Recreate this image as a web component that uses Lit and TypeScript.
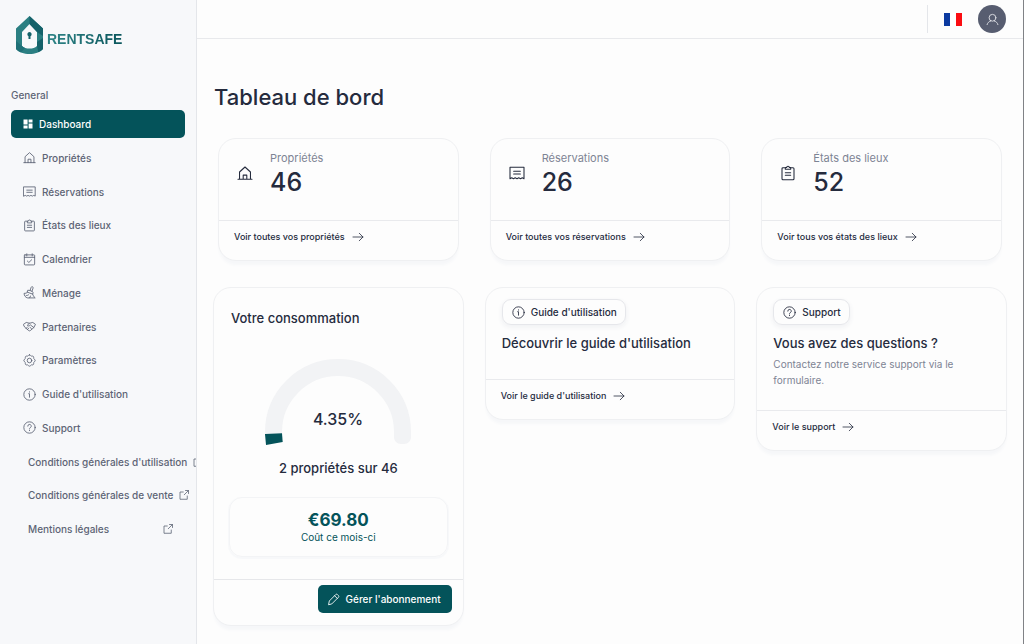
import { LitElement, html, svg, css } from "lit";
import { customElement, property } from "lit/decorators.js";

const icons: Record<string, unknown> = {
  dashboard: svg`<path fill="currentColor" stroke="none" d="M3 3h8.200v10H3zM3 15.200h8.200V21H3zM13.200 3H21v5.800h-7.800zM13.200 11H21v10h-7.800z"/>`,
  home: svg`<path d="M1.500 21.500h21M3.800 21.500v-11L12 3l8.200 7.500v11M9.300 21.500v-6.300h5.400v6.300"/>`,
  receipt: svg`<path d="M1.500 3.500h21v17l-2.600-1.300-2.600 1.300-2.700-1.300-2.600 1.300-2.700-1.300-2.600 1.300-2.600-1.300-2.600 1.300zM7 9.500h10M7 13.500h10"/>`,
  clipboard: svg`<path d="M8 4H4.500A1.500 1.500 0 0 0 3 5.500v15A1.500 1.500 0 0 0 4.500 22h15a1.500 1.500 0 0 0 1.500-1.500v-15A1.500 1.500 0 0 0 19.500 4H16M8 6.500V3.800h2a2 2 0 0 1 4 0h2v2.700zM8 11.500h8M8 15.500h8"/>`,
  calendar: svg`<path d="M3.500 3.500h17a1 1 0 0 1 1 1v16a1.500 1.500 0 0 1-1.500 1.500H4a1.500 1.500 0 0 1-1.500-1.500v-16a1 1 0 0 1 1-1zM2.500 8h19M7 1.500v4M17 1.500v4M8 14.800l2.800 2.700 5.200-5"/>`,
  broom: svg`<path d="M13 8.300l2-5.700a1.900 1.900 0 0 1 3.600 1.300l-2 5.700M9.500 7.800c3 0 7.500 1.600 9.300 4l-1 3.200-9.500-3.500zM8.300 11.500C6.500 13.300 4.500 13.700 2 13.500c0 4 2.500 8 6.500 8.500h14c-2-1.500-3.800-4-4.700-7M6 17.500c2 .2 3.500-.4 4.500-1.500M12 22c1-1 1.500-2 1.800-3.500"/>`,
  handshake: svg`<path d="M1 8l5-3.500 6 1.500 6-1.500L23 8l-3 6-6.500 5.500c-1 .8-2 .8-3 0L4 14zM12 6L8 9.500c.7 1.800 2.600 1.800 4 .5l1.500-1 6.500 5M6 15.500l2-2.500M8.500 17.500l2-2.500M13 13.500l3 3"/>`,
  gear: svg`<path d="M12 1.500c1.600 0 2.300 1.900 3.200 2.300s2.600-.6 3.900.7.300 3 .7 3.900 2.700 1.500 2.700 3.600-2.300 2.700-2.700 3.600.6 2.600-.7 3.900-3 .3-3.900.7-1.600 2.300-3.200 2.300-2.300-1.900-3.200-2.300-2.600.6-3.900-.7-.3-3-.7-3.900S1.500 14.100 1.500 12s2.300-2.700 2.700-3.600-.6-2.600.7-3.900 3-.3 3.900-.7S10.400 1.500 12 1.500z"/><circle cx="12" cy="12" r="4.200"/>`,
  info: svg`<circle cx="12" cy="12" r="10.500"/><path d="M10.500 10.500H12v6.500M12 7v.600"/>`,
  help: svg`<circle cx="12" cy="12" r="10.500"/><path d="M8.800 9.500a3.200 3.200 0 1 1 4.700 2.800c-1 .5-1.500 1-1.500 2.200M12 17v.800"/>`,
  external: svg`<path d="M10.500 6H4v14.500h14.500V14M15 3h6v6M21 3l-8.500 8.500"/>`,
  arrow: svg`<path d="M2 12h20M14.500 4.500L22 12l-7.500 7.500"/>`,
  pencil: svg`<path d="M3 21l1.300-6.300L16.200 2.800c.9-.9 2.100-.9 3 0l2 2c.9.900.9 2.100 0 3L9.300 19.700zM14 5l5 5"/>`,
  user: svg`<circle cx="12" cy="8.800" r="6.300"/><path d="M2 21.500c.8-3.300 3.200-5.800 6.800-6.800M22 21.500c-.8-3.300-3.200-5.800-6.800-6.800"/>`,
};

@customElement("rs-icon")
class RsIcon extends LitElement {
  @property() name = "";

  static styles = css`
    :host { display: block; flex: none; width: 13px; height: 13px; }
    .glyph { display: block; width: 100%; height: 100%; fill: none; stroke: currentColor; stroke-width: 1.6; stroke-linejoin: round; stroke-linecap: round; }
  `;

  render() {
    return html`<svg class="glyph" viewBox="0 0 24 24" aria-hidden="true">${icons[this.name]}</svg>`;
  }
}

@customElement("app-root")
class AppRoot extends LitElement {
  static styles = css`
    :host {
      display: flex;
      min-height: 100vh;
      box-sizing: border-box;
      border-right: 1px solid #808286;
      background: #fdfdfd;
      color: #252b3d;
      font-family: Inter, "Liberation Sans", sans-serif;
      font-size: 10px;
      line-height: 16px;
    }
    * { box-sizing: border-box; }
    a { color: inherit; text-decoration: none; }
    h1, h2, p { margin: 0; font-weight: 500; }
    button { font: inherit; border: 0; cursor: pointer; }

    .sidebar {
      flex: none;
      width: 197px;
      padding: 16px 11px;
      overflow: hidden;
      background: #f7f8fa;
      border-right: 1px solid #e4e6ea;
      color: #5d6475;
      font-weight: 500;
    }
    .logo { display: flex; align-items: center; gap: 4px; padding-left: 5px; }
    .mark { flex: none; width: 27px; height: 38px; }
    .brand {
      padding-top: 8px;
      font: bold 14px/16px "Liberation Sans", sans-serif;
      color: transparent;
      background: linear-gradient(90deg, #2f8587, #0a565c);
      background-clip: text;
      -webkit-background-clip: text;
    }
    .group { padding: 33px 0 7px; }
    .nav { display: flex; flex-direction: column; justify-content: space-between; min-height: 433px; }
    .item { display: flex; align-items: center; height: 28px; gap: 6px; padding: 0 12px; white-space: nowrap; }
    .active { background: #04535a; color: #fff; border-radius: 5px; padding: 0 11px; gap: 5px; }
    .outside { justify-content: space-between; padding: 0 11px 0 17px; gap: 5px; }
    .mini { width: 12px; height: 12px; }

    .page { flex: 1; min-width: 0; }
    .topbar { display: flex; align-items: center; justify-content: flex-end; height: 39px; padding-right: 17px; border-bottom: 1px solid #e8e9ec; }
    .lang { display: flex; align-items: center; height: 28px; padding: 0 16px; background: none; border-left: 1px solid #e4e6ea; }
    .flag { display: block; width: 18px; height: 13px; }
    .avatar { display: grid; place-items: center; width: 28px; height: 28px; padding: 0; border-radius: 50%; background: #575d70; color: #e6e7eb; }

    .content { padding: 42px 16px 18px; }
    .title { padding-left: 1px; font-size: 22px; line-height: 32px; }
    .grid { display: grid; grid-template-columns: repeat(3, minmax(0, 1fr)); gap: 21px; align-items: start; }
    .stats { padding: 25px 0 26px; }
    .card { border: 1px solid #eff0f2; border-radius: 18px; background: #fdfdfd; box-shadow: 0 5px 3px -1px #f6f7f9; }
    .stat { margin: 0 5px; }
    .figure { display: flex; height: 82px; padding: 11px 18px; gap: 17px; border-bottom: 1px solid #e9eaed; }
    .figure rs-icon { width: 16px; height: 16px; margin-top: 15px; }
    .label { color: #7d8494; font-size: 11px; font-weight: 400; line-height: 16px; }
    .count { font-size: 25px; line-height: 32px; }
    .foot { display: flex; height: 39px; padding: 8px 15px 0; }
    .more { display: flex; align-items: center; align-self: flex-start; gap: 7px; font-size: 9px; font-weight: 500; }
    .more rs-icon { width: 12px; height: 12px; }

    .usage { padding: 22px 15px; display: flex; flex-direction: column; border-bottom: 1px solid #e6e7ea; }
    .heading { font-size: 13px; line-height: 16px; padding-left: 2px; }
    .gauge { display: block; align-self: center; width: 146px; height: 86px; margin: 33px 0 15px; }
    .percent { font: 500 16px Inter, sans-serif; fill: #252b3d; text-anchor: middle; }
    .ratio { font-size: 13px; line-height: 16px; text-align: center; }
    .cost { margin-top: 21px; padding: 12px 0; border: 1px solid #f3f4f6; border-radius: 13px; box-shadow: 0 1px 1px 1px #f7f8fa; text-align: center; color: #04535a; }
    .price { font-size: 17px; font-weight: 700; line-height: 20px; }
    .note { font-weight: 400; line-height: 14px; }
    .actions { display: flex; justify-content: flex-end; padding: 5px 11px 12px; }
    .primary { display: flex; align-items: center; gap: 6px; height: 28px; padding: 0 11px 0 9px; border-radius: 5px; background: #04535a; color: #fff; font-weight: 500; }

    .help { display: flex; flex-direction: column; align-items: flex-start; padding: 11px 16px 28px; border-bottom: 1px solid #e9eaed; }
    .pill { display: flex; align-items: center; gap: 6px; height: 26px; padding: 0 8px 0 9px; border: 1px solid #e6e7eb; border-radius: 9px; box-shadow: 0 2px 4px 1px #f2f3f5; font-weight: 500; }
    .question { margin-top: 10px; font-size: 13px; line-height: 16px; }
    .text { margin: 5px 0 -6px; color: #7d8494; font-weight: 400; line-height: 16px; }
  `;

  private menu = [
    ["dashboard", "Dashboard"],
    ["home", "Propriétés"],
    ["receipt", "Réservations"],
    ["clipboard", "États des lieux"],
    ["calendar", "Calendrier"],
    ["broom", "Ménage"],
    ["handshake", "Partenaires"],
    ["gear", "Paramètres"],
    ["info", "Guide d'utilisation"],
    ["help", "Support"],
  ];

  private legal = ["Conditions générales d'utilisation", "Conditions générales de vente", "Mentions légales"];

  private stats = [
    { icon: "home", label: "Propriétés", count: 46, link: "Voir toutes vos propriétés" },
    { icon: "receipt", label: "Réservations", count: 26, link: "Voir toutes vos réservations" },
    { icon: "clipboard", label: "États des lieux", count: 52, link: "Voir tous vos états des lieux" },
  ];

  private more(text: string) {
    return html`<div class="foot"><a class="more" href="#">${text}<rs-icon name="arrow"></rs-icon></a></div>`;
  }

  private helpCard(icon: string, tag: string, title: string, link: string, text = "") {
    return html`<article class="card">
      <div class="help">
        <span class="pill"><rs-icon name=${icon}></rs-icon>${tag}</span>
        <h2 class="question">${title}</h2>
        ${text ? html`<p class="text">${text}</p>` : ""}
      </div>
      ${this.more(link)}
    </article>`;
  }

  render() {
    return html`
      <aside class="sidebar">
        <a class="logo" href="#">
          <svg class="mark" viewBox="0 0 27 38" aria-hidden="true">
            <path fill="#2b7f82" fill-rule="evenodd" d="M13.500 0L27 12.500V33c-3 3.500-8 5-13.500 5S3 36.500 0 33V12.500zM13.500 8L6 16v14c2 2 4.500 2.500 7.500 2.500S19 32 21 30V16z"/>
            <path fill="#15626a" d="M13.500 0L27 12.500V20l-6-4-7.500-8zM21 26l6-4v11c-1.200 1.400-2.800 2.500-4.700 3.300L21 30z"/>
            <path fill="#1f7077" d="M0 25l6 5c1 1 2 1.500 3 1.900L5 36.500C3 35.700 1.300 34.500 0 33z"/>
            <path fill="#15626a" d="M13.500 16a2.300 2.300 0 0 1 1 4.300V23h-2v-2.700a2.300 2.300 0 0 1 1-4.300z"/>
          </svg>
          <span class="brand">RENTSAFE</span>
        </a>
        <div class="group">General</div>
        <nav class="nav">
          ${this.menu.map(([icon, text], i) => html`<a class="item ${i === 0 ? "active" : ""}" href="#">
            <rs-icon class=${i === 0 ? "mini" : ""} name=${icon}></rs-icon>${text}</a>`)}
          ${this.legal.map((text) => html`<a class="item outside" href="#">${text}<rs-icon class="mini" name="external"></rs-icon></a>`)}
        </nav>
      </aside>
      <div class="page">
        <header class="topbar">
          <button class="lang" aria-label="Français">
            <svg class="flag" viewBox="0 0 18 13" aria-hidden="true"><path fill="#fff" d="M0 0h18v13H0z"/><path fill="#0b3aa0" d="M0 0h6v13H0z"/><path fill="#fb0d12" d="M12 0h6v13h-6z"/></svg>
          </button>
          <button class="avatar" aria-label="Profil"><rs-icon name="user"></rs-icon></button>
        </header>
        <main class="content">
          <h1 class="title">Tableau de bord</h1>
          <section class="grid stats">
            ${this.stats.map((s) => html`<article class="card stat">
              <div class="figure">
                <rs-icon name=${s.icon}></rs-icon>
                <div><h2 class="label">${s.label}</h2><p class="count">${s.count}</p></div>
              </div>
              ${this.more(s.link)}
            </article>`)}
          </section>
          <section class="grid">
            <article class="card">
              <div class="usage">
                <h2 class="heading">Votre consommation</h2>
                <svg class="gauge" viewBox="0 0 146 86" role="img" aria-label="4.35%">
                  <path fill="none" stroke="#f2f3f5" stroke-width="17" d="M8.500 75V73a64.500 64.500 0 0 1 129 0v3"/>
                  <path fill="#f2f3f5" d="M129 74h17v4c0 4-3 7-7 7h-3c-4 0-7-3-7-7z"/>
                  <path fill="#04535a" d="M0 75l17-.700.700 8.700L1 86z"/>
                  <text class="percent" x="73" y="66">4.35%</text>
                </svg>
                <p class="ratio">2 propriétés sur 46</p>
                <div class="cost"><p class="price">€69.80</p><p class="note">Coût ce mois-ci</p></div>
              </div>
              <div class="actions"><button class="primary"><rs-icon name="pencil"></rs-icon>Gérer l'abonnement</button></div>
            </article>
            ${this.helpCard("info", "Guide d'utilisation", "Découvrir le guide d'utilisation", "Voir le guide d'utilisation")}
            ${this.helpCard("help", "Support", "Vous avez des questions ?", "Voir le support", "Contactez notre service support via le formulaire.")}
          </section>
        </main>
      </div>
    `;
  }
}
